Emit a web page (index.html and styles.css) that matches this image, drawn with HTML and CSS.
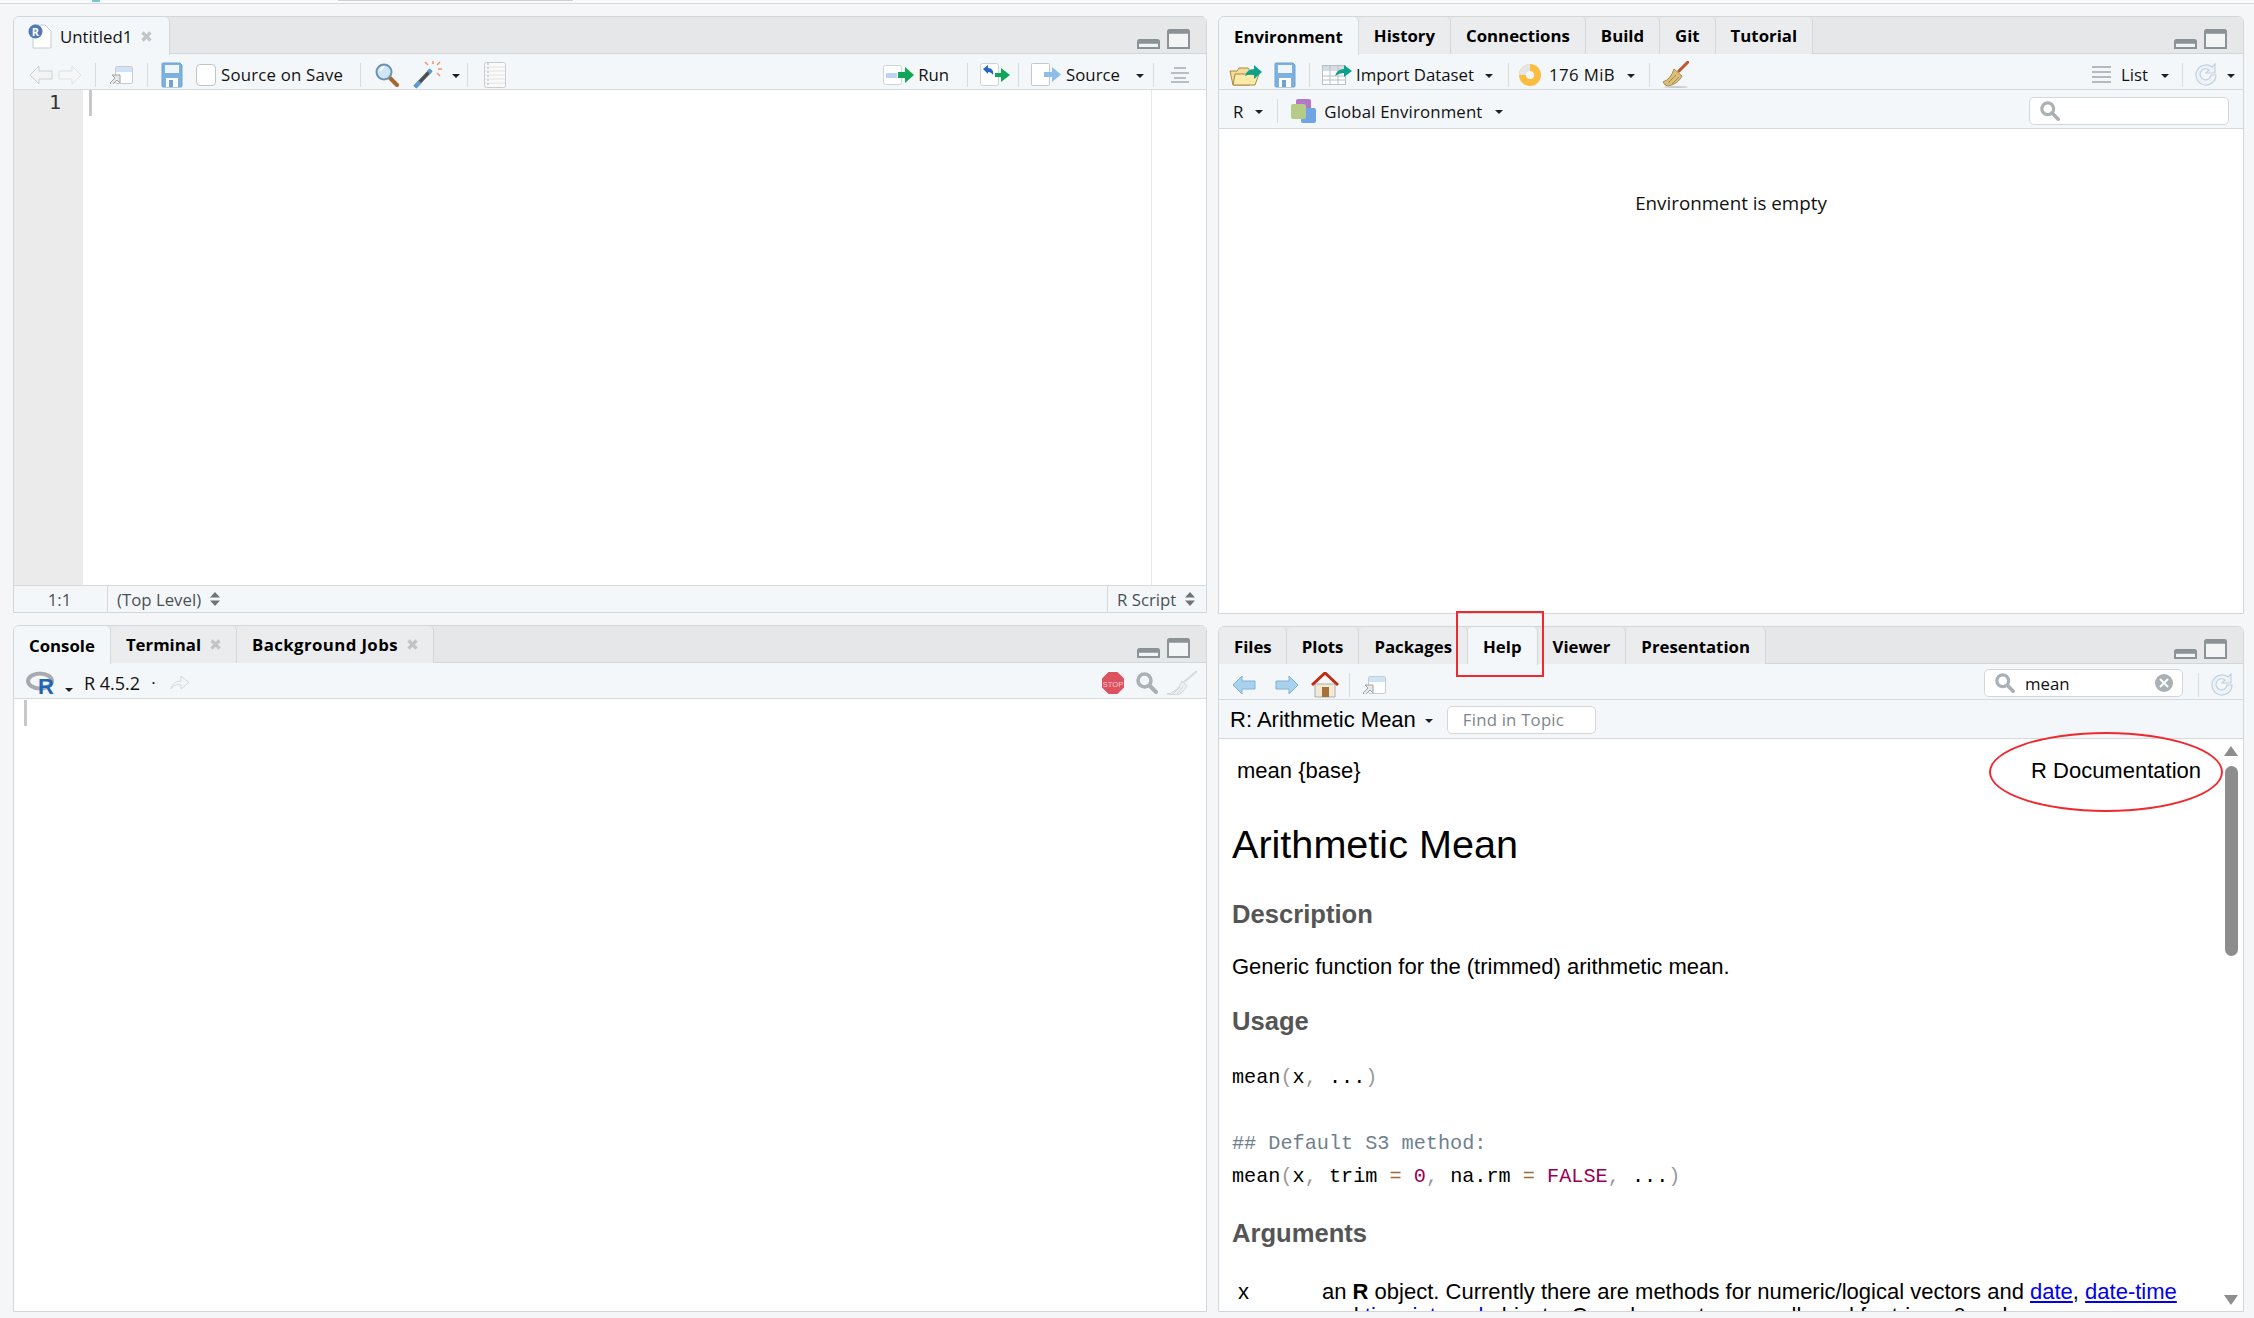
FILE: index.html
```html
<!DOCTYPE html>
<html lang="en">
<head>
<meta charset="utf-8">
<title>RStudio</title>
<link rel="stylesheet" href="styles.css">
</head>
<body>
<svg class="sprite" xmlns="http://www.w3.org/2000/svg">
  <symbol id="i-min" viewBox="0 0 23 10"><path d="M1 9V3q0-2 2-2h17q2 0 2 2v6z" fill="#f2f4f5" stroke="#8b9396" stroke-width="2"/><path d="M1 4V3q0-2 2-2h17q2 0 2 2v1z" fill="#8b9396" stroke="#8b9396" stroke-width="1.5"/></symbol>
  <symbol id="i-max" viewBox="0 0 23 20"><path d="M1 19V3q0-2 2-2h17q2 0 2 2v16z" fill="#f2f4f5" stroke="#8b9396" stroke-width="2"/><path d="M1 4V3q0-2 2-2h17q2 0 2 2v1z" fill="#8b9396" stroke="#8b9396" stroke-width="1.5"/></symbol>
  <symbol id="i-back" viewBox="0 0 24 20"><path d="M1 10 10 1v5h13v8H10v5z" fill="#a9d2ee" stroke="#7eb2d4"/></symbol>
  <symbol id="i-fwd" viewBox="0 0 24 20"><path d="M23 10 14 1v5H1v8h13v5z" fill="#a9d2ee" stroke="#7eb2d4"/></symbol>
  <symbol id="i-back-off" viewBox="0 0 24 20"><path d="M1 10 10 1v5h13v8H10v5z" fill="#f3f4f4" stroke="#cdd0d2"/></symbol>
  <symbol id="i-fwd-off" viewBox="0 0 24 20"><path d="M23 10 14 1v5H1v8h13v5z" fill="#f6f7f7" stroke="#dfe1e2"/></symbol>
  <symbol id="i-win" viewBox="0 0 24 18"><rect x="6.500" y=".5" width="17" height="17" rx="1.500" fill="#fff" stroke="#c6ccd0"/><path d="M7 1h16v5H7z" fill="#cfe3f7"/><path d="M1 17l5-5-3-3h8v8l-3-3-5 5z" fill="#e6e8ea" stroke="#9da3a7"/></symbol>
  <symbol id="i-save" viewBox="0 0 22 26"><path d="M1 2q0-1 1-1h17l2 2v21q0 1-1 1H2q-1 0-1-1z" fill="#7db1de" stroke="#6ea3d2"/><rect x="4" y="3" width="14" height="8" fill="#eef5fb"/><path d="M5 25v-9h12v9z" fill="#fff"/><rect x="8" y="18" width="4" height="7" fill="#6ea3d2"/></symbol>
  <symbol id="i-search" viewBox="0 0 24 24"><path d="M15 15l7 7" stroke="#a5672f" stroke-width="4" stroke-linecap="round"/><circle cx="9" cy="9" r="7.500" fill="#cfe6f7" stroke="#6f93ad" stroke-width="2"/><path d="M5 8q1-3 4-4" stroke="#fff" stroke-width="2" fill="none"/></symbol>
  <symbol id="i-gsearch" viewBox="0 0 22 22"><path d="M13.500 13.500l6.500 6.500" stroke="#a9b1b4" stroke-width="4" stroke-linecap="round"/><circle cx="8.500" cy="8.500" r="6.500" fill="none" stroke="#a9b1b4" stroke-width="3.500"/></symbol>
  <symbol id="i-wand" viewBox="0 0 30 28"><path d="M2 26 18 9" stroke="#4a4f55" stroke-width="4"/><path d="M2 26l5-5M15.500 11.500 18 9" stroke="#5b9bd5" stroke-width="4"/><path d="M20 0v3M29 8h-4M27 1l-3 3M12 1l3 3M27 15l-3-3" stroke="#f2956c" stroke-width="1.500"/></symbol>
  <symbol id="i-notebook" viewBox="0 0 22 26"><rect x=".5" y=".5" width="21" height="25" rx="2" fill="#fafafa" stroke="#c9cdcf"/><path d="M1 5h20M1 9h20M1 13h20M1 17h20M1 21h20" stroke="#dfe2e4"/><path d="M4 1v24" stroke="#d2d5d7" stroke-dasharray="2 2" stroke-width="2"/></symbol>
  <symbol id="i-run" viewBox="0 0 31 20"><rect x=".5" y=".5" width="18" height="19" rx="2" fill="#fff" stroke="#cdd2d5"/><rect x="3" y="8" width="11" height="5" fill="#bcd4ef"/><path d="M15 7h7V2l9 8-9 8v-5h-7z" fill="#0fa657"/></symbol>
  <symbol id="i-rerun" viewBox="0 0 30 23"><rect x=".5" y=".5" width="18" height="22" rx="2" fill="#fff" stroke="#cdd2d5"/><path d="M3 6l5-4v3c4 0 6 3 5 7-1-2-3-3-5-3v2z" fill="#2566c4"/><path d="M15 10h6V5l9 7-9 7v-5h-6z" fill="#0fa657"/></symbol>
  <symbol id="i-source" viewBox="0 0 30 23"><rect x=".5" y=".5" width="18" height="22" rx="1" fill="#fff" stroke="#c3c8cb"/><path d="M13 9h8V4l9 7.500-9 7.500v-5h-8z" fill="#8dbde8"/></symbol>
  <symbol id="i-outline" viewBox="0 0 18 16"><path d="M3 1h12M0 6h18M3 11h12M0 15h18" stroke="#b8bec1" stroke-width="2"/></symbol>
  <symbol id="i-lines" viewBox="0 0 19 18"><path d="M0 1h19M0 6h19M0 11h19M0 16h19" stroke="#b4babd" stroke-width="2"/></symbol>
  <symbol id="i-folder" viewBox="0 0 33 22"><path d="M4 21 1 7h7l2-3h9l2 3v14z" fill="#f4dc9a" stroke="#a98a3a"/><path d="M4 21 6 10h24l-4 11z" fill="#fbe9a8" stroke="#a98a3a"/><path d="M16 12q2-7 9-7V1l8 7-8 7v-4q-5-1-9 1z" fill="#0fa08a"/></symbol>
  <symbol id="i-import" viewBox="0 0 30 21"><rect x=".5" y="1.500" width="23" height="19" fill="#fff" stroke="#b9c0c4"/><path d="M1 2h22v5H1z" fill="#d5dde2"/><path d="M1 12h22M1 16h22M8 2v18M16 2v18" stroke="#b9c0c4"/><path d="M13 12q2-7 9-7V1l8 6-8 6V9q-5 0-9 3z" fill="#0fa08a"/></symbol>
  <symbol id="i-pie" viewBox="0 0 22 22"><circle cx="11" cy="11" r="11" fill="#fbbd3f"/><path d="M11 11V0A11 11 0 0 0 0 11z" fill="#e3e5e6"/><circle cx="11" cy="11" r="4" fill="#f4f7f9"/></symbol>
  <symbol id="i-broom" viewBox="0 0 27 27"><path d="M17 10 26 1" stroke="#c0562f" stroke-width="3" stroke-linecap="round"/><path d="M12 8l8 7q-4 8-14 10-3 0-5-4 8-3 11-13z" fill="#dcc07a" stroke="#a08a50"/><path d="M6 22l8-8M10 23l7-7" stroke="#a08a50"/><ellipse cx="14" cy="26" rx="12" ry="1" fill="#c9cdd0"/></symbol>
  <symbol id="i-pbroom" viewBox="0 0 32 25"><path d="M18 12 31 1" stroke="#d6dbde" stroke-width="2"/><path d="M1 24c7-1 12-6 15-13l5 5c-3 5-7 9-10 9z" fill="#eceef0" stroke="#cfd4d7"/><path d="M7 24l7-7M11 24l6-7" stroke="#cfd4d7"/></symbol>
  <symbol id="i-env" viewBox="0 0 25 24"><rect x="5" y="0" width="15" height="15" rx="2" fill="#b277c7"/><rect x="10" y="9" width="15" height="15" rx="2" fill="#6fa5e6"/><rect x="0" y="5" width="15" height="15" rx="2" fill="#b5cb87"/></symbol>
  <symbol id="i-refresh" viewBox="0 0 24 24"><path d="M22 12a10 10 0 1 1-4-8l3-3v9h-9l3-3a5.500 5.500 0 1 0 2 5z" fill="#eef3fa" stroke="#c3d0e0" stroke-width="1.200"/></symbol>
  <symbol id="i-share" viewBox="0 0 20 15"><path d="M1 14c1-5 5-8 10-8V1l8 6.500-8 6.500V10c-4-1-7 0-10 4z" fill="#f4f5f6" stroke="#d3d7da"/></symbol>
  <symbol id="i-home" viewBox="0 0 28 26"><path d="M4 12h20v13H4z" fill="#f3e9d4" stroke="#a9adb0"/><rect x="11" y="15" width="7" height="10" fill="#a8703a"/><path d="M1 13 14 1l13 12" fill="none" stroke="#c22a12" stroke-width="3"/></symbol>
  <symbol id="i-x" viewBox="0 0 11 11"><path d="M1.500 1.500l8 8M9.500 1.500l-8 8" stroke="#c2c5c7" stroke-width="3.200"/></symbol>
  <symbol id="i-clear" viewBox="0 0 18 18"><circle cx="9" cy="9" r="9" fill="#a9b1b4"/><path d="M5 5l8 8M13 5l-8 8" stroke="#fff" stroke-width="2"/></symbol>
  <symbol id="i-updown" viewBox="0 0 10 14"><path d="M5 0l5 5.500H0zM5 14l5-5.500H0z" fill="#6f7477"/></symbol>
  <symbol id="i-caret" viewBox="0 0 8 4"><path d="M0 0h8L4 4z" fill="#1d1f20"/></symbol>
</svg>

<div class="topstrip"><span class="strip-dot"></span><span class="strip-bar"></span></div>

<main class="workbench">
  <div class="column column-left">
    <section class="pane pane-source">
      <div class="tabbar">
        <div class="tab tab-active tab-doc">
          <svg class="rfile" width="25" height="25" viewBox="0 0 25 25"><path d="M5 1h12l6 6v17H5z" fill="#fff" stroke="#c6cbce"/><circle cx="7.500" cy="7.500" r="7" fill="#4f7ab5"/><text x="7.500" y="11.500" class="svg-r">R</text></svg>
          <span>Untitled1</span>
          <svg class="tab-x" width="11" height="11"><use href="#i-x"/></svg>
        </div>
        <div class="winctl"><svg width="23" height="10"><use href="#i-min"/></svg><svg width="23" height="20"><use href="#i-max"/></svg></div>
      </div>
      <div class="toolbar">
        <svg class="m15" width="24" height="20"><use href="#i-back-off"/></svg>
        <svg class="m5" width="24" height="20"><use href="#i-fwd-off"/></svg>
        <i class="sep m13"></i>
        <svg class="m13" width="24" height="18"><use href="#i-win"/></svg>
        <i class="sep m14"></i>
        <svg class="m13" width="22" height="26"><use href="#i-save"/></svg>
        <span class="check"></span>
        <span class="lbl lbl-save">Source on Save</span>
        <i class="sep m17"></i>
        <svg class="m14" width="24" height="24"><use href="#i-search"/></svg>
        <svg class="m14" width="30" height="28"><use href="#i-wand"/></svg>
        <svg class="caret m9" width="8" height="4"><use href="#i-caret"/></svg>
        <i class="sep m7"></i>
        <svg class="m16" width="22" height="26"><use href="#i-notebook"/></svg>
        <svg class="push" width="31" height="20"><use href="#i-run"/></svg>
        <span class="lbl m4">Run</span>
        <i class="sep m18"></i>
        <svg class="m12" width="30" height="23"><use href="#i-rerun"/></svg>
        <i class="sep m8"></i>
        <svg class="m12" width="30" height="23"><use href="#i-source"/></svg>
        <span class="lbl m5">Source</span>
        <svg class="caret m16" width="8" height="4"><use href="#i-caret"/></svg>
        <i class="sep m9"></i>
        <svg class="m17 end17" width="18" height="16"><use href="#i-outline"/></svg>
      </div>
      <div class="editor">
        <div class="gutter">1</div>
        <div class="code"><i class="cursor"></i></div>
        <div class="margin-line"></div>
      </div>
      <div class="statusbar">
        <span class="st-pos">1:1</span>
        <span class="st-scope">(Top Level) <svg class="ud" width="10" height="14"><use href="#i-updown"/></svg></span>
        <span class="st-type">R Script <svg class="ud" width="10" height="14"><use href="#i-updown"/></svg></span>
      </div>
    </section>

    <section class="pane pane-console">
      <div class="tabbar">
        <div class="tab tab-active">Console</div>
        <div class="tab">Terminal<svg class="tab-x" width="11" height="11"><use href="#i-x"/></svg></div>
        <div class="tab"><span class="tab-wide">Background Jobs</span><svg class="tab-x" width="11" height="11"><use href="#i-x"/></svg></div>
        <div class="winctl"><svg width="23" height="10"><use href="#i-min"/></svg><svg width="23" height="20"><use href="#i-max"/></svg></div>
      </div>
      <div class="toolbar">
        <svg class="m13 rlogo" width="28" height="24" viewBox="0 0 28 24"><ellipse cx="13" cy="10" rx="12" ry="7.500" fill="none" stroke="#a7abb0" stroke-width="4"/><text x="19" y="23" class="svg-rlogo">R</text></svg>
        <svg class="caret m10 drop" width="8" height="4"><use href="#i-caret"/></svg>
        <span class="lbl lbl-ver m11">R 4.5.2</span>
        <span class="lbl m11">·</span>
        <svg class="m14" width="20" height="15"><use href="#i-share"/></svg>
        <svg class="push" width="22" height="22" viewBox="0 0 22 22"><path d="M6.500 0h9L22 6.500v9L15.500 22h-9L0 15.500v-9z" fill="#dc5260"/><text x="11" y="14.500" class="svg-stop">STOP</text></svg>
        <svg class="m12" width="22" height="22"><use href="#i-gsearch"/></svg>
        <svg class="m8 end8" width="32" height="25"><use href="#i-pbroom"/></svg>
      </div>
      <div class="console-body"><i class="cursor"></i></div>
    </section>
  </div>

  <div class="column column-right">
    <section class="pane pane-env">
      <div class="tabbar">
        <div class="tab tab-active">Environment</div>
        <div class="tab">History</div>
        <div class="tab">Connections</div>
        <div class="tab">Build</div>
        <div class="tab">Git</div>
        <div class="tab">Tutorial</div>
        <div class="winctl"><svg width="23" height="10"><use href="#i-min"/></svg><svg width="23" height="20"><use href="#i-max"/></svg></div>
      </div>
      <div class="toolbar">
        <svg class="m10" width="33" height="22"><use href="#i-folder"/></svg>
        <svg class="m12" width="22" height="26"><use href="#i-save"/></svg>
        <i class="sep m13"></i>
        <svg class="m12" width="30" height="21"><use href="#i-import"/></svg>
        <span class="lbl m4">Import Dataset</span>
        <svg class="caret m11" width="8" height="4"><use href="#i-caret"/></svg>
        <i class="sep m15"></i>
        <svg class="m10" width="22" height="22"><use href="#i-pie"/></svg>
        <span class="lbl lbl-mib m8">176 MiB</span>
        <svg class="caret m12" width="8" height="4"><use href="#i-caret"/></svg>
        <i class="sep m14"></i>
        <svg class="m12" width="27" height="27"><use href="#i-broom"/></svg>
        <svg class="push" width="19" height="18"><use href="#i-lines"/></svg>
        <span class="lbl m10">List</span>
        <svg class="caret m13" width="8" height="4"><use href="#i-caret"/></svg>
        <i class="sep m13"></i>
        <svg class="m11" width="24" height="24"><use href="#i-refresh"/></svg>
        <svg class="caret m9 end8" width="8" height="4"><use href="#i-caret"/></svg>
      </div>
      <div class="toolbar toolbar-2">
        <span class="lbl m14">R</span>
        <svg class="caret m12" width="8" height="4"><use href="#i-caret"/></svg>
        <i class="sep m14"></i>
        <svg class="m13" width="25" height="24"><use href="#i-env"/></svg>
        <span class="lbl lbl-global m8">Global Environment</span>
        <svg class="caret m12" width="8" height="4"><use href="#i-caret"/></svg>
        <div class="searchbox searchbox-env push"><svg width="22" height="22"><use href="#i-gsearch"/></svg></div>
      </div>
      <div class="env-body">Environment is empty</div>
    </section>

    <section class="pane pane-help">
      <div class="tabbar">
        <div class="tab">Files</div>
        <div class="tab">Plots</div>
        <div class="tab">Packages</div>
        <div class="tab tab-active">Help</div>
        <div class="tab">Viewer</div>
        <div class="tab">Presentation</div>
        <div class="winctl"><svg width="23" height="10"><use href="#i-min"/></svg><svg width="23" height="20"><use href="#i-max"/></svg></div>
      </div>
      <div class="toolbar">
        <svg class="m13" width="24" height="20"><use href="#i-back"/></svg>
        <svg class="m19" width="24" height="20"><use href="#i-fwd"/></svg>
        <svg class="m12" width="28" height="26"><use href="#i-home"/></svg>
        <i class="sep m10"></i>
        <svg class="m12" width="24" height="18"><use href="#i-win"/></svg>
        <div class="searchbox searchbox-help push">
          <svg width="22" height="22"><use href="#i-gsearch"/></svg>
          <span class="search-term">mean</span>
          <svg class="clear" width="18" height="18"><use href="#i-clear"/></svg>
        </div>
        <i class="sep m15"></i>
        <svg class="m11 end9" width="24" height="24"><use href="#i-refresh"/></svg>
      </div>
      <div class="toolbar toolbar-2">
        <span class="help-title">R: Arithmetic Mean</span>
        <svg class="caret m9" width="8" height="4"><use href="#i-caret"/></svg>
        <div class="findbox">Find in Topic</div>
      </div>
      <div class="help-body">
        <article class="doc">
          <div class="doc-head"><span>mean {base}</span><span>R Documentation</span></div>
          <h1>Arithmetic Mean</h1>
          <h2 class="h-desc">Description</h2>
          <p class="p-gen">Generic function for the (trimmed) arithmetic mean.</p>
          <h2 class="h-usage">Usage</h2>
          <pre class="c1"><span>mean</span><b>(</b>x<b>,</b> ...<b>)</b></pre>
          <pre class="c2"><em>## Default S3 method:</em></pre>
          <pre class="c3"><span>mean</span><b>(</b>x<b>,</b> trim <u>=</u> <s>0</s><b>,</b> na.rm <u>=</u> <s>FALSE</s><b>,</b> ...<b>)</b></pre>
          <h2 class="h-args">Arguments</h2>
          <div class="arg">
            <span class="arg-name">x</span>
            <span class="arg-text">an <strong>R</strong> object. Currently there are methods for numeric/logical vectors and <a href="#">date</a>, <a href="#">date-time</a> and <a href="#">time interval</a> objects. Complex vectors are allowed for trim = 0, only.</span>
          </div>
        </article>
        <div class="scrollbar">
          <i class="sb-up"></i>
          <i class="sb-thumb"></i>
          <i class="sb-down"></i>
        </div>
      </div>
    </section>
  </div>

  <div class="mark-rect"></div>
  <div class="mark-ellipse"></div>
</main>
</body>
</html>
```

FILE: styles.css
```css
* { box-sizing: border-box; }
html, body { margin: 0; height: 100%; }
body {
  width: 2254px;
  height: 1318px;
  overflow: hidden;
  background: #f4f6f8;
  color: #111;
  font-family: "Open Sans", "Noto Sans", sans-serif;
  font-size: 16.800px;
}
.sprite { display: none; }
svg { flex: none; display: block; }
.rlogo { overflow: visible; }

.topstrip { height: 4px; background: #fafbfb; border-bottom: 1px solid #d7dbdd; position: relative; }
.strip-dot { position: absolute; left: 92px; top: 0; width: 8px; height: 2px; background: #7cc3e0; }
.strip-bar { position: absolute; left: 338px; top: 0; width: 235px; height: 1px; background: #cfd2d3; }

.workbench { position: relative; display: flex; gap: 11px; padding: 12px 0 0 13px; }
.column { display: flex; flex-direction: column; }
.column-left { width: 1194px; gap: 12px; }
.column-right { width: 1026px; gap: 12px; }

.pane { display: flex; flex-direction: column; border: 1px solid #d3d7da; border-top-left-radius: 6px; border-top-right-radius: 6px; overflow: hidden; background: #fff; }
.pane-source { height: 597px; }
.pane-console { height: 687px; }
.pane-env { height: 598px; }
.pane-help { height: 686px; }

.tabbar { flex: none; height: 37px; display: flex; background: #e5e7e9; border-bottom: 1px solid #d3d7da; position: relative; }
.tab {
  display: flex; align-items: center; height: 37px; padding: 0 15px;
  background: #ebecee; border-right: 1px solid #d3d7da; border-top-right-radius: 5px; border-top-left-radius: 5px;
  font-weight: 700; font-size: 16.800px; color: #000; white-space: nowrap;
}
.tab-active { background: #f4f7f9; height: 38px; position: relative; z-index: 1; }
.tab-doc { font-weight: 400; font-size: 16.800px; padding: 0 17px 0 14px; color: #111; }
.tab-wide { letter-spacing: .4px; }
.pane-help .tab:first-child { padding-right: 14px; }
.pane-help .tab { padding-top: 1px; }
.rfile { margin-right: 7px; }
.svg-r { font: 700 11px "Open Sans", sans-serif; fill: #fff; text-anchor: middle; }
.svg-rlogo { font: 700 22px "Liberation Sans", sans-serif; fill: #1f65b7; text-anchor: middle; }
.svg-stop { font: 400 7.500px "Liberation Sans", sans-serif; fill: #f6c9cd; text-anchor: middle; }
.tab-x { margin-left: 9px; }
.winctl { margin-left: auto; margin-right: 16px; display: flex; align-items: flex-end; gap: 7px; padding-bottom: 4px; height: 36px; }

.toolbar { flex: none; height: 36px; padding-top: 6px; display: flex; align-items: center; background: #f4f7f9; border-bottom: 1px solid #d6dadc; }
.pane-console .toolbar { padding-top: 4px; }
.toolbar-2 { height: 39px; padding-top: 2px; }
.pane-env .toolbar-2 { padding-top: 4px; }
.lbl { font-size: 16.800px; white-space: nowrap; color: #111; }
.lbl-ver { font-size: 18px; }
.lbl-save { letter-spacing: .2px; }
.lbl-mib { letter-spacing: .4px; }
.lbl-global { letter-spacing: .15px; }
.sep { width: 1px; height: 24px; background: #d9dcde; flex: none; }
.caret { margin-top: 2px; }
.drop { margin-top: 14px; }
.push { margin-left: auto; }
.m4 { margin-left: 4px; } .m5 { margin-left: 5px; } .m7 { margin-left: 7px; } .m8 { margin-left: 8px; }
.m9 { margin-left: 9px; } .m10 { margin-left: 10px; } .m11 { margin-left: 11px; } .m12 { margin-left: 12px; }
.m13 { margin-left: 13px; } .m14 { margin-left: 14px; } .m15 { margin-left: 15px; } .m16 { margin-left: 16px; }
.m17 { margin-left: 17px; } .m18 { margin-left: 18px; }
.m19 { margin-left: 19px; }
.end17 { margin-right: 17px; } .end8 { margin-right: 8px; } .end9 { margin-right: 9px; }
.check { width: 20px; height: 22px; margin-left: 13px; margin-right: 5px; background: #fff; border: 1px solid #bfc4c7; border-radius: 4px; flex: none; }

.editor { flex: 1; display: flex; position: relative; background: #fff; }
.gutter { width: 69px; background: #ebebeb; text-align: right; padding-right: 22px; font: 20px/24px "DejaVu Sans Mono", monospace; color: #333; }
.code { flex: 1; padding-left: 6px; }
.cursor { display: block; width: 3px; height: 26px; background: #c8c8c8; }
.margin-line { position: absolute; left: 1137px; top: 0; bottom: 0; width: 1px; background: #e8e8e8; }

.statusbar { flex: none; height: 27px; display: flex; align-items: center; background: #f4f7f9; border-top: 1px solid #d6dadc; color: #4a5157; font-size: 16.800px; }
.statusbar span { height: 100%; display: flex; align-items: center; }
.st-pos { width: 94px; padding-right: 2px; justify-content: center; border-right: 1px solid #d6dadc; }
.st-scope { padding-left: 9px; gap: 9px; }
.st-type { margin-left: auto; width: 99px; padding-left: 9px; gap: 9px; border-left: 1px solid #d6dadc; white-space: nowrap; }

.console-body { flex: 1; padding: 1px 0 0 10px; background: #fff; }

.searchbox, .findbox { background: #fff; border: 1px solid #d3d7da; border-radius: 5px; }
.searchbox { height: 28px; display: flex; align-items: center; padding-left: 10px; }
.searchbox svg { width: 20px; height: 20px; }
.searchbox-env { width: 200px; margin-right: 14px; }
.searchbox-help { width: 199px; margin-bottom: 3px; }
.search-term { margin-left: 10px; font-size: 16.800px; color: #111; }
.searchbox .clear { width: 18px; height: 18px; margin-left: auto; margin-right: 9px; }
.findbox { margin-left: 14px; width: 149px; height: 28px; line-height: 26px; padding-left: 15px; font-size: 16.800px; letter-spacing: .2px; color: #80858a; }
.help-title { margin-left: 11px; font: 22px "Liberation Sans", sans-serif; color: #000; }

.env-body { flex: 1; padding-top: 61px; text-align: center; font-size: 18.800px; color: #111; background: #fff; }

.help-body { flex: 1; display: flex; background: #fff; overflow: hidden; min-height: 0; }
.doc { flex: 1; padding: 17px 0 0 13px; font: 22px/30px "Liberation Sans", sans-serif; color: #000; overflow: hidden; min-width: 0; }
.doc-head { display: flex; justify-content: space-between; padding: 0 22px 0 5px; }
.doc h1 { margin: 35px 0 0; font-size: 39.600px; line-height: 46px; font-weight: 400; }
.doc h2 { margin: 0; font-size: 25.600px; line-height: 30px; font-weight: 700; color: #555; }
.doc p { margin: 0; }
.doc pre { margin: 0; font: 20.200px/30px "Liberation Mono", monospace; color: #000; }
.doc pre b { font-weight: 400; color: #999; }
.doc pre em { font-style: normal; color: #708090; }
.doc pre u { text-decoration: none; color: #9a6e3a; }
.doc pre s { text-decoration: none; color: #990055; }
.h-desc { padding-top: 32px; }
.p-gen { padding-top: 23px; }
.h-usage { padding-top: 24px; }
.c1 { padding-top: 27px; }
.c2 { padding-top: 36px; }
.c3 { padding-top: 3px; }
.h-args { padding-top: 26px; }
.arg { display: flex; padding-top: 32px; line-height: 24px; }
.arg-name { width: 90px; padding-left: 6px; flex: none; }
.arg-text { width: 880px; flex: none; }
.doc a { color: #0000ee; }

.scrollbar { flex: none; width: 20px; position: relative; }
.sb-up { position: absolute; left: 1px; top: 7px; border: 7px solid transparent; border-top: 0; border-bottom: 10px solid #8d8d8d; }
.sb-thumb { position: absolute; left: 2px; top: 27px; width: 13px; height: 190px; border-radius: 7px; background: #8d8d8d; }
.sb-down { position: absolute; left: 1px; bottom: 6px; border: 7px solid transparent; border-bottom: 0; border-top: 10px solid #8d8d8d; }

.mark-rect { position: absolute; left: 1456px; top: 607px; width: 88px; height: 66px; border: 2px solid #ee2a2f; }
.mark-ellipse { position: absolute; left: 1989px; top: 728px; width: 234px; height: 80px; border: 2px solid #ee2a2f; border-radius: 50%; }
```
